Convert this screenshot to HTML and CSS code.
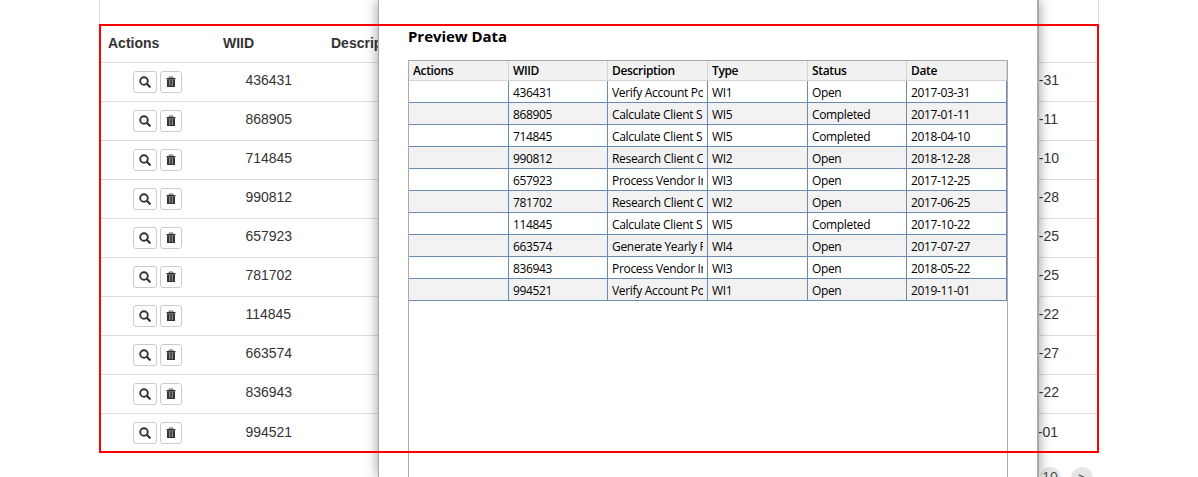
FILE: index.html
```html
<!DOCTYPE html>
<html lang="en">
<head>
<meta charset="utf-8">
<title>Preview Data</title>
<link rel="stylesheet" href="styles.css">
</head>
<body>
<svg class="defs" aria-hidden="true">
  <symbol id="search" viewBox="0 0 12 12"><circle cx="5" cy="5" r="3.8" fill="none" stroke="#333" stroke-width="1.9"/><path d="M7.8 7.8 10.8 10.8" stroke="#333" stroke-width="2.2" stroke-linecap="round"/></symbol>
  <symbol id="trash" viewBox="0 0 10 12"><path d="M3.2 2V1h3.6v1" fill="none" stroke="#555" stroke-width="1"/><path d="M.5 2h9v1.4h-9z" fill="#333"/><path d="M1 3.4h8V11H1z" fill="#333"/><path d="M3.5 4v6M6.5 4v6" stroke="#888" stroke-width="1"/><path d="M5 4v6" stroke="#777" stroke-width=".7"/></symbol>
</svg>
<main class="page">
  <section class="panel">
    <div class="row head"><span>Actions</span><span>WIID</span><span>Description</span></div>
    <div class="rows" id="items"></div>
  </section>
  <nav class="pager"><span class="page-link">10</span><span class="page-link next">&gt;</span></nav>
</main>
<div class="dialog">
  <h1 class="title">Preview Data</h1>
  <div class="grid">
    <div class="grid-row grid-head"><span>Actions</span><span>WIID</span><span>Description</span><span>Type</span><span>Status</span><span>Date</span></div>
    <div id="preview"></div>
  </div>
</div>
<div class="highlight"></div>
<script src="script.js"></script>
</body>
</html>
```
FILE: script.js
```js
const items = [
  ["436431", "Verify Account Po", "WI1", "Open", "2017-03-31"],
  ["868905", "Calculate Client S", "WI5", "Completed", "2017-01-11"],
  ["714845", "Calculate Client S", "WI5", "Completed", "2018-04-10"],
  ["990812", "Research Client C", "WI2", "Open", "2018-12-28"],
  ["657923", "Process Vendor In", "WI3", "Open", "2017-12-25"],
  ["781702", "Research Client C", "WI2", "Open", "2017-06-25"],
  ["114845", "Calculate Client S", "WI5", "Completed", "2017-10-22"],
  ["663574", "Generate Yearly R", "WI4", "Open", "2017-07-27"],
  ["836943", "Process Vendor In", "WI3", "Open", "2018-05-22"],
  ["994521", "Verify Account Po", "WI1", "Open", "2019-11-01"]
];
const icon = name => `<svg class="icon ${name}"><use href="#${name}"/></svg>`;

document.getElementById("items").innerHTML = items.map(([id, , , , date]) => `
  <div class="row item">
    <span class="actions"><button class="btn" aria-label="View">${icon("search")}</button><button class="btn small" aria-label="Delete">${icon("trash")}</button></span>
    <span class="id">${id}</span><span class="date">${date}</span>
  </div>`).join("");

document.getElementById("preview").innerHTML = items.map(([id, desc, type, status, date]) => `
  <div class="grid-row"><span></span><span>${id}</span><span><span class="desc">${desc}</span></span><span>${type}</span><span class="status">${status}</span><span>${date}</span></div>`).join("");
```
FILE: styles.css
```css
* { box-sizing: border-box; }
body {
  margin: 0;
  height: 477px;
  overflow: hidden;
  background: #fff;
  font-family: "Liberation Sans", Arial, sans-serif;
  color: #333;
}
.defs { position: absolute; width: 0; height: 0; }
.page { width: 1000px; margin-left: 99px; }
.panel {
  height: 453px;
  padding-top: 24px;
  border: solid #ddd;
  border-width: 0 1px;
}
.row { display: grid; font-size: 14px; line-height: 20px; }
.head {
  grid-template-columns: 115px 108px 1fr;
  height: 38px;
  padding: 9px 0 0 8px;
  font-weight: bold;
}
.item {
  grid-template-columns: 145.4px 742px 1fr;
  height: 39px;
  border-top: 1px solid #ddd;
  padding-top: 7px;
}
.actions { display: flex; gap: 3px; padding: 1px 0 0 33px; }
.btn {
  display: flex;
  align-items: center;
  justify-content: center;
  width: 24px;
  height: 22px;
  padding: 0;
  border: 1px solid #ccc;
  border-radius: 3px;
  background: #fff;
}
.btn.small { width: 22px; }
.icon { display: block; }
.search { width: 12px; height: 12px; }
.trash { width: 10px; height: 12px; }
.item:last-child .id, .item:last-child .date { padding-top: 1px; }
.pager { display: flex; justify-content: flex-end; gap: 10px; padding: 14px 6px 0 0; }
.page-link {
  width: 22px;
  height: 22px;
  border-radius: 50%;
  background: #e6e6e6;
  color: #555;
  font-size: 14px;
  line-height: 21px;
  text-align: center;
}
.page-link.next { line-height: 23px; }
.dialog {
  position: absolute;
  top: 0;
  left: 378px;
  width: 661px;
  height: 477px;
  padding: 26px 29px 0;
  border: solid #aaa;
  border-width: 0 2px 0 1px;
  background: #fff;
  box-shadow: 0 0 12px rgba(0, 0, 0, .4);
  color: #000;
  font-family: "Open Sans", "Noto Sans", sans-serif;
}
.title { margin: 0; height: 34px; font-size: 15px; font-weight: 700; line-height: 20px; letter-spacing: -.05px; }
.grid {
  width: 600px;
  height: 430px;
  border: 1px solid #aaa;
  font-size: 12px;
  line-height: 21px;
}
.grid-row {
  display: grid;
  grid-template-columns: 100px 99px 100px 100px 99px 100px;
  height: 22px;
}
.grid-row > span {
  overflow: hidden;
  white-space: nowrap;
  padding-left: 4px;
  padding-top: 1px;
  border-right: 1px solid #688caf;
  border-bottom: 1px solid #688caf;
  letter-spacing: -.35px;
}
.grid-row:nth-child(even) { background: #f2f2f2; }
.desc { display: block; width: 91px; overflow: hidden; letter-spacing: -.31px; }
.grid-row.grid-head { height: 20px; background: #f1f1f1; font-weight: 600; line-height: 19px; }
.grid-head > span { border-color: #d3d3d3; padding-top: 0; }
.highlight {
  position: absolute;
  top: 24px;
  left: 99px;
  width: 1000px;
  height: 429px;
  border: 2px solid #f00;
  pointer-events: none;
}
```
